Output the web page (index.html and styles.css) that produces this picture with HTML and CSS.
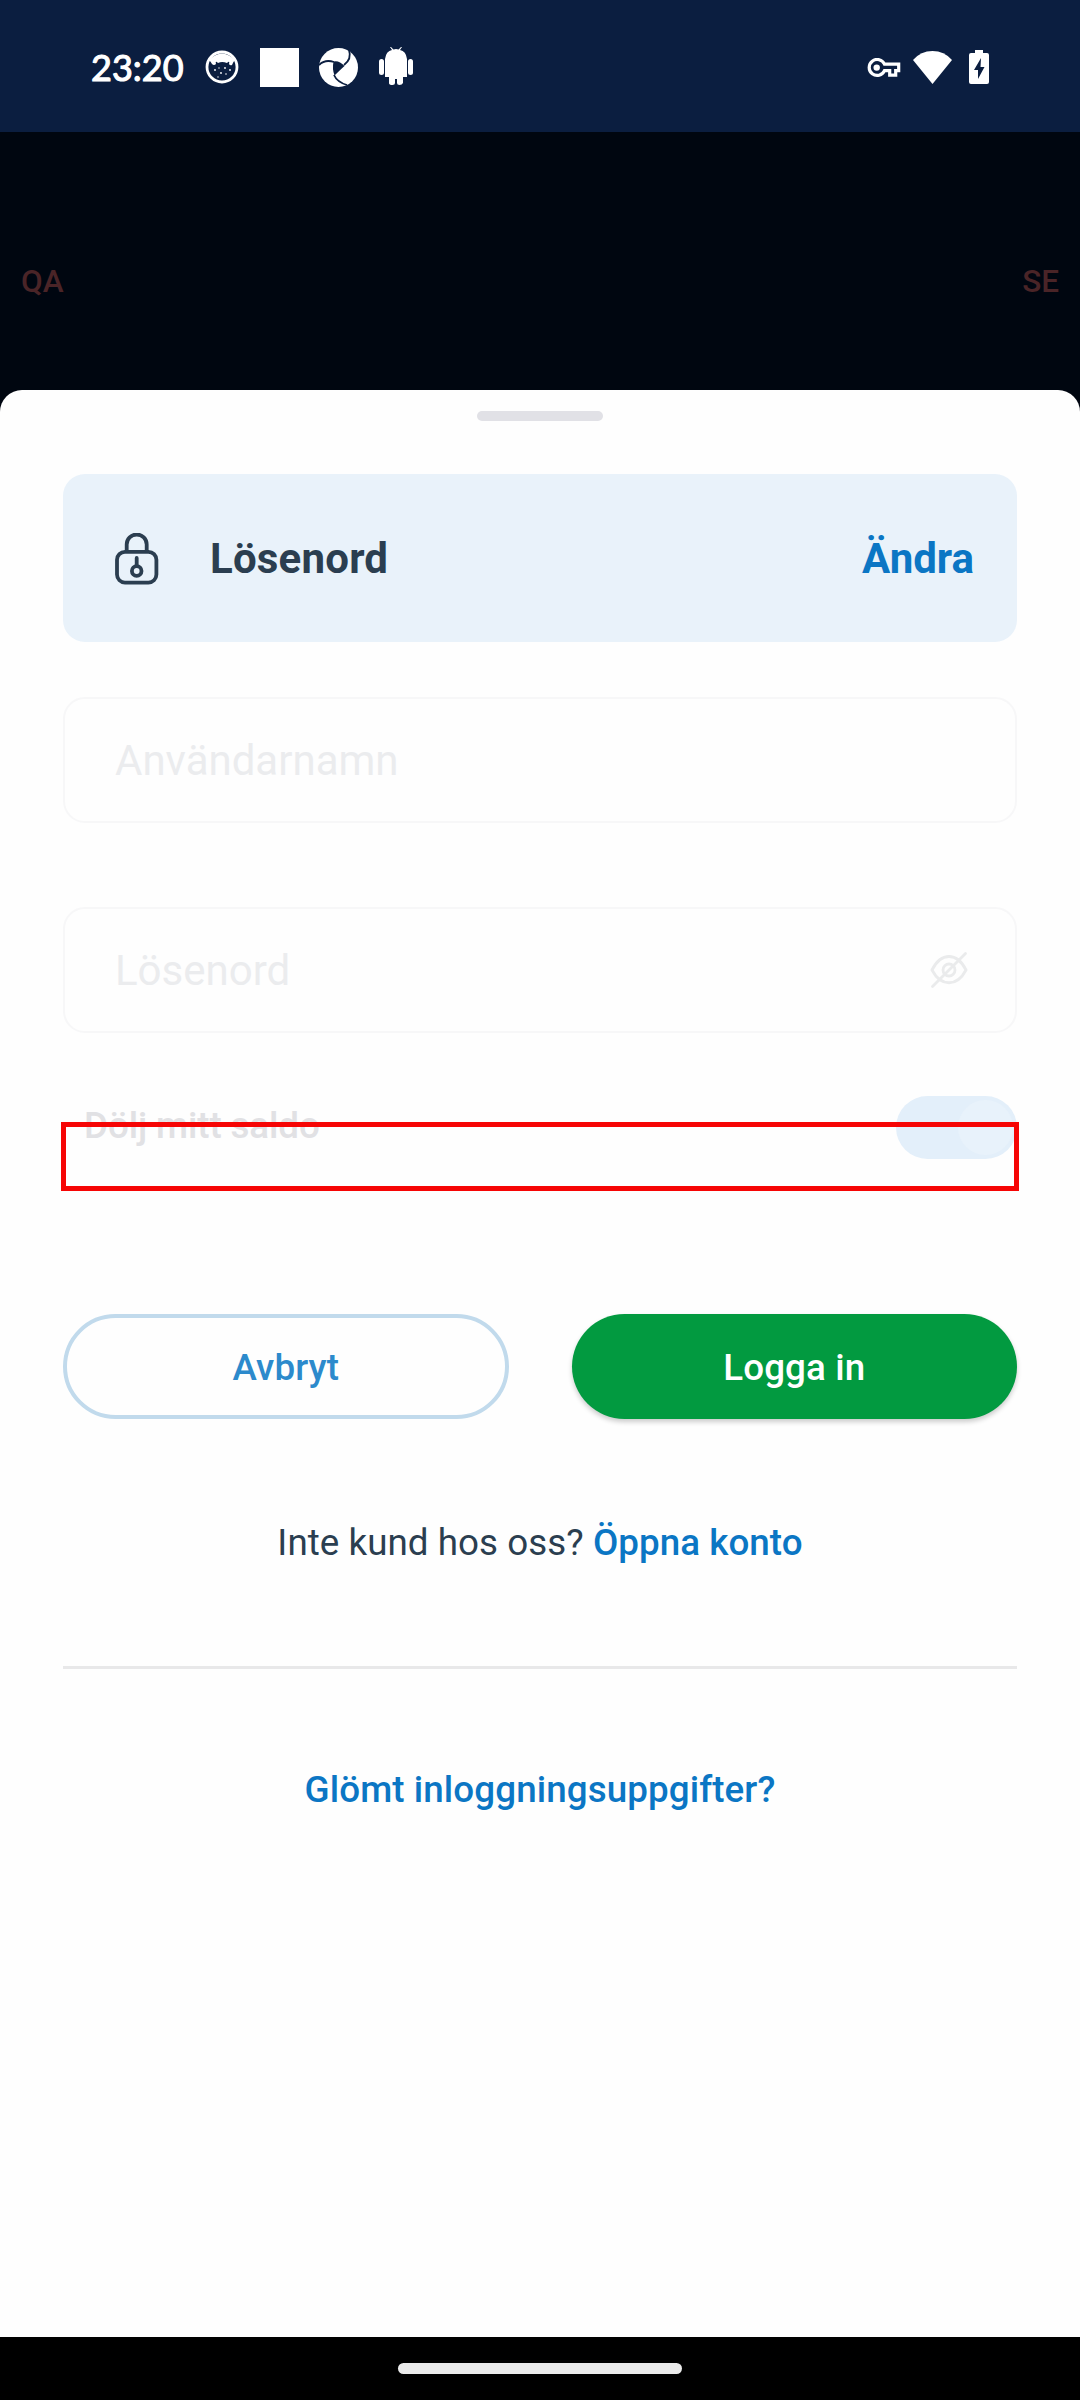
FILE: index.html
```html
<!DOCTYPE html>
<html lang="sv">
<head>
<meta charset="utf-8">
<title>Logga in</title>
<link rel="stylesheet" href="styles.css">
</head>
<body>
<div class="screen">
  <div class="status">
    <span class="clock">23:20</span>
    <svg class="ic-cat" width="34" height="34" viewBox="0 0 34 34"><circle cx="17" cy="17" r="15" fill="none" stroke="#fff" stroke-width="2.8"/><path d="M4 10Q17-3 30 10Q28 12 27 15Q25 16 24 14Q25 10 22 13Q17 11 13 13Q10 10 11 14Q9 16 7 14Q6 12 4 10Z" fill="#fff"/><g fill="#fff"><circle cx="10" cy="20" r=".9"/><circle cx="14" cy="18" r=".7"/><circle cx="20" cy="18" r=".9"/><circle cx="25" cy="20" r=".9"/><circle cx="16" cy="23" r=".9"/><circle cx="21" cy="24" r=".8"/><circle cx="13" cy="27" r=".7"/></g></svg>
    <span class="ic-square"></span>
    <svg class="ic-shutter" width="39" height="39" viewBox="0 0 39 39"><circle cx="19.500" cy="19.500" r="19.500" fill="#fff"/><g fill="none" stroke="#0b1e40" stroke-width="1.800"><path d="M15 14Q6 11 0 17"/><path d="M25 17Q33 11 30 2"/><path d="M15 27Q18 34 28 37"/></g><path d="M14.500 13.500Q20 12 25.500 18Q21 22 15.500 27.500Q13 21 14.500 13.500Z" fill="#0b1e40"/></svg>
    <svg class="ic-android" width="34" height="40" viewBox="0 0 34 40" fill="#fff"><path d="M6 12Q7 4 13 3L11 0H12L14.500 2.400Q17 1.800 19.500 2.400L22 0H23L21 3Q27 4 28 12V30H24V36Q23 38 20.500 38Q18 38 18 36V32H16V36Q16 38 13.500 38Q10 38 10 36V30H6Z"/><rect x="0" y="12" width="5" height="16" rx="2.500"/><rect x="29" y="12" width="5" height="16" rx="2.500"/></svg>
    <span class="spacer"></span>
    <svg class="ic-key" width="34" height="20" viewBox="0 0 34 20"><path d="M17.500 6.200H31.700V12.700H28.700V17.200H22.700V12.700H17.500A8 8 0 1 1 17.500 6.200Z" fill="none" stroke="#fff" stroke-width="3.200"/><circle cx="9.700" cy="9.600" r="3.200" fill="#fff"/></svg>
    <svg class="ic-wifi" width="39" height="33" viewBox="0 0 40 33" preserveAspectRatio="none"><path d="M20 33L0 9Q8 0 20 0T40 9Z" fill="#fff"/></svg>
    <svg class="ic-battery" width="20" height="34" viewBox="0 0 20 34"><path d="M6 0H14V3H18Q20 3 20 5V32Q20 34 18 34H2Q0 34 0 32V5Q0 3 2 3H6Z" fill="#fff"/><path d="M12 8L5 20H9V29L15.500 17H11.500Z" fill="#0b1e40"/></svg>
  </div>

  <div class="backdrop"><span>QA</span><span>SE</span></div>

  <div class="sheet">
    <div class="handle"></div>
    <div class="method">
      <svg width="44" height="52" viewBox="0 0 44 52" fill="none" stroke="#2b3e50" stroke-width="3.800" stroke-linecap="round"><rect x="2" y="18.800" width="39.400" height="30.800" rx="8"/><path d="M11.700 18V11.500A10 10 0 0 1 31.700 11.500V18"/><circle cx="21.700" cy="38" r="4.800"/><path d="M21.700 25V32"/></svg>
      <span class="method-name">Lösenord</span>
      <a class="change">Ändra</a>
    </div>
    <div class="field">Användarnamn</div>
    <div class="field password"><span>Lösenord</span>
      <svg width="38" height="38" viewBox="0 0 38 38" fill="none" stroke="#eaebec" stroke-width="2.800"><path d="M2 19C11 1 27 1 36 19C27 36 11 36 2 19Z"/><circle cx="19" cy="19" r="6"/><path d="M2.500 35.500L35.500 2.500" stroke-linecap="round"/></svg>
    </div>
    <div class="balance">
      <span class="balance-label">Dölj mitt saldo</span>
      <span class="toggle"><i></i></span>
      <div class="highlight"></div>
    </div>
    <div class="actions">
      <a class="btn cancel">Avbryt</a>
      <a class="btn login">Logga in</a>
    </div>
    <p class="signup">Inte kund hos oss? <a>Öppna konto</a></p>
    <a class="forgot">Glömt inloggningsuppgifter?</a>
  </div>
  <div class="navbar"><span></span></div>
</div>
</body>
</html>
```
FILE: styles.css
```css
* { box-sizing: border-box; }
body { margin: 0; font-family: Roboto, sans-serif; }
.screen { width: 1080px; height: 2400px; display: flex; flex-direction: column; background: #000610; overflow: hidden; }

.status { height: 132px; flex: none; display: flex; align-items: center; padding: 2px 91px 0; background: #0b1e40; }
.status svg { flex: none; }
.clock { width: 114px; color: #fff; font: 400 36px/40px Lato, sans-serif; letter-spacing: 0; white-space: nowrap; -webkit-text-stroke: 1.1px #fff; }
.ic-square { width: 39px; height: 39px; background: #fff; margin-left: 21px; }
.ic-shutter { margin-left: 20px; }
.ic-android { margin-left: 21px; }
.spacer { flex: 1; }
.ic-key { margin-top: 2px; }
.ic-wifi { margin-left: 12px; }
.ic-battery { margin-left: 17px; }

.backdrop { height: 258px; flex: none; display: flex; justify-content: space-between; padding: 131px 21px 0; color: #4a2427; font-size: 31.5px; font-weight: 500; line-height: 37px; }

.sheet { flex: 1; display: flex; flex-direction: column; padding: 21px 63px 0; background: #fefefe; border-radius: 22px 22px 0 0; }
.handle { width: 126px; height: 10px; border-radius: 5px; background: #e1e1e6; align-self: center; }
.method { height: 168px; margin-top: 53px; display: flex; align-items: center; padding: 0 43px 0 52px; border-radius: 22px; background: #e9f2fa; font-size: 42px; font-weight: 700; color: #2b3e50; }
.method svg { margin-top: 2px; }
.method-name { flex: 1; margin-left: 51px; letter-spacing: .2px; }
.change { color: #0b76c4; }
.field { height: 126px; margin-top: 55px; display: flex; align-items: center; padding: 0 50px; border: 2px solid #f7f7f8; border-radius: 22px; font-size: 42px; color: #ebecee; }
.password { margin-top: 84px; justify-content: space-between; padding-right: 47px; }
.balance { position: relative; height: 63px; margin-top: 63px; display: flex; align-items: center; justify-content: space-between; padding-left: 21px; font-size: 36.75px; font-weight: 500; color: #e1e1e4; }
.balance-label { padding-bottom: 4px; letter-spacing: -.1px; }
.toggle { width: 121px; height: 63px; padding: 4px; border-radius: 32px; background: #e3effa; display: flex; justify-content: flex-end; }
.toggle i { width: 55px; height: 55px; border-radius: 50%; background: #e8f2fb; }
.highlight { position: absolute; left: -2px; top: 26px; width: 958px; height: 69px; border: 5px solid #f60505; }
.actions { margin-top: 155px; display: grid; grid-template-columns: 1fr 1fr; gap: 63px; }
.btn { height: 105px; border-radius: 53px; display: flex; align-items: center; justify-content: center; font-size: 36.75px; font-weight: 500; letter-spacing: .1px; padding-top: 1px; }
.cancel { border: 4px solid #c1daec; color: #2c8acc; }
.login { background: #029a40; color: #fff; box-shadow: 0 3px 5px rgba(0,0,0,.2); }
.signup { margin: 3px 0 0; height: 247px; padding-top: 99px; border-bottom: 3px solid #e8e8e9; text-align: center; font-size: 36.75px; line-height: 43px; color: #2b3e50; letter-spacing: .05px; }
.signup a { color: #0b76c4; font-weight: 500; }
.forgot { margin-top: 99px; text-align: center; font-size: 36.75px; line-height: 43px; font-weight: 500; color: #0b76c4; letter-spacing: .1px; }

.navbar { height: 63px; flex: none; background: #000; display: flex; align-items: center; justify-content: center; }
.navbar span { width: 284px; height: 11px; border-radius: 6px; background: #ebebeb; }
```
